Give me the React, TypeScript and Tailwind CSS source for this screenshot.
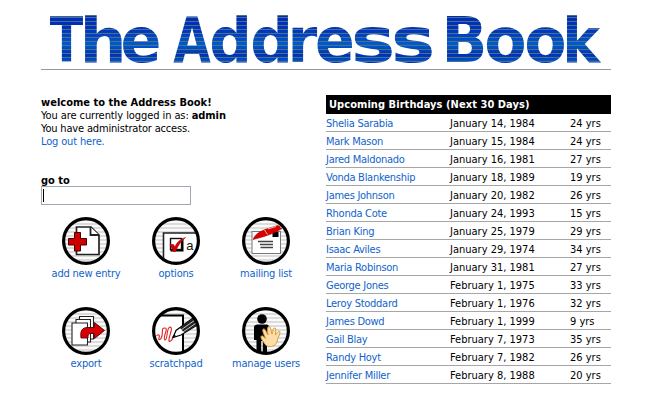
import React from "react";

const birthdays: [string, string, string][] = [
  ["Shelia Sarabia", "January 14, 1984", "24 yrs"],
  ["Mark Mason", "January 15, 1984", "24 yrs"],
  ["Jared Maldonado", "January 16, 1981", "27 yrs"],
  ["Vonda Blankenship", "January 18, 1989", "19 yrs"],
  ["James Johnson", "January 20, 1982", "26 yrs"],
  ["Rhonda Cote", "January 24, 1993", "15 yrs"],
  ["Brian King", "January 25, 1979", "29 yrs"],
  ["Isaac Aviles", "January 29, 1974", "34 yrs"],
  ["Maria Robinson", "January 31, 1981", "27 yrs"],
  ["George Jones", "February 1, 1975", "33 yrs"],
  ["Leroy Stoddard", "February 1, 1976", "32 yrs"],
  ["James Dowd", "February 1, 1999", "9 yrs"],
  ["Gail Blay", "February 7, 1973", "35 yrs"],
  ["Randy Hoyt", "February 7, 1982", "26 yrs"],
  ["Jennifer Miller", "February 8, 1988", "20 yrs"],
];

// Advance, left and right ink edge of each letter, in em.
const metrics: Record<string, [number, number, number]> = {
  T: [0.682, 0.005, 0.677],
  h: [0.712, 0.084, 0.634],
  e: [0.678, 0.043, 0.631],
  A: [0.774, 0.005, 0.769],
  d: [0.716, 0.046, 0.634],
  r: [0.493, 0.084, 0.49],
  s: [0.595, 0.053, 0.544],
  B: [0.762, 0.092, 0.706],
  o: [0.687, 0.043, 0.643],
  k: [0.665, 0.084, 0.682],
};

// Left and right edge of every letter of the title.
const title: [string, number, number][] = [
  ["T", 50, 83],
  ["h", 85, 121.5],
  ["e", 123, 158.5],
  ["A", 173.5, 210.5],
  ["d", 212, 247],
  ["d", 253, 288],
  ["r", 292.5, 317],
  ["e", 317.5, 352],
  ["s", 355, 391.5],
  ["s", 395, 431.5],
  ["B", 447, 484],
  ["o", 487, 524],
  ["o", 527, 564],
  ["k", 567, 601],
];

function Logo() {
  return (
    <svg width="570" height="54" viewBox="41 12 570 54" className="block overflow-visible">
      <defs>
        <linearGradient id="sheen" x1="0" y1="0" x2="0" y2="1">
          <stop offset="0" stopColor="#002cb4" />
          <stop offset="0.3" stopColor="#0034bc" />
          <stop offset="0.62" stopColor="#005ccc" />
          <stop offset="0.84" stopColor="#0030b4" />
          <stop offset="1" stopColor="#0058cc" />
        </linearGradient>
        <pattern id="scan" patternUnits="userSpaceOnUse" x="0" y="16" width="1400" height="46">
          <rect width="1400" height="46" fill="url(#sheen)" />
          {Array.from({ length: 12 }, (_, i) => (
            <rect key={i} y={i * 4 + 1} width="1400" height="1" fill="#4c7088" />
          ))}
        </pattern>
      </defs>
      <text
        y="62"
        fill="url(#scan)"
        className="font-['DejaVu_Sans',sans-serif] text-[63px] font-bold"
      >
        {title.map(([letter, left, right], i) => {
          const [advance, inkLeft, inkRight] = metrics[letter];
          const scale = (right - left) / (inkRight - inkLeft);
          return (
            <tspan key={i} x={left - inkLeft * scale} textLength={advance * scale} lengthAdjust="spacingAndGlyphs">
              {letter}
            </tspan>
          );
        })}
      </text>
    </svg>
  );
}

function Badge({ id, children }: { id: string; children: React.ReactNode }) {
  return (
    <svg width="48" height="48" viewBox="0 0 48 48" className="block shrink-0">
      <defs>
        <clipPath id={id}>
          <circle cx="24" cy="24" r="22" />
        </clipPath>
      </defs>
      <g clipPath={`url(#${id})`}>
        <rect width="48" height="48" fill="#fafafa" />
        {Array.from({ length: 12 }, (_, i) => (
          <rect key={i} y={i * 4 + 2} width="48" height="2" fill="#dcdcdc" />
        ))}
        {children}
      </g>
      <circle cx="24" cy="24" r="22.4" fill="none" stroke="#000" strokeWidth="3.2" />
    </svg>
  );
}

function AddIcon() {
  return (
    <Badge id="add">
      <path d="M14.5 10H29L37 18V37.5H14.5Z" fill="#fff" stroke="#222" strokeWidth="1.7" />
      <path d="M28.5 10V18H37" fill="#fff" stroke="#222" strokeWidth="1.8" />
      <path d="M12.5 15.5h6v6h6v6.5h-6v6h-6v-6h-6v-6.5h6Z" fill="#d00000" stroke="#400" strokeWidth="1" />
    </Badge>
  );
}

function OptionsIcon() {
  return (
    <Badge id="options">
      <path d="M11.5 50V16H50V50Z" fill="#fff" stroke="#222" strokeWidth="1.6" />
      <rect x="18.5" y="21.5" width="11" height="11" fill="#fff" stroke="#111" strokeWidth="1.4" />
      <path d="M30.5 22V33.5H18.5" fill="none" stroke="#000" strokeWidth="2" />
      <path d="M18 27.5 21.5 27.5 22.8 30C25 25 28.5 22 33.5 20.5C29 24 26 28.5 23.5 34.5H21.3Z" fill="#d00000" stroke="#c00000" strokeWidth="0.6" />
      <text x="34.2" y="32.5" fill="#111" className="font-['Liberation_Sans',sans-serif] text-[13px]">a</text>
    </Badge>
  );
}

function MailIcon() {
  return (
    <Badge id="mailing">
      <rect x="10" y="14.5" width="28.5" height="22" fill="#fff" stroke="#777" strokeWidth="1" />
      <path d="M16 24.5h15M18 27.5h13M18.5 30.5h12.5" stroke="#444" strokeWidth="1.3" />
      <rect x="30.5" y="15" width="6" height="5" fill="#000" />
      <path d="M11 22.5C13 17 18 14.5 23 12.5L35.5 8.5 38.5 9.5 37.5 10.5 40 11.5 35 14.5C28 18 19 20.5 11 22.5Z" fill="#d80000" stroke="#900" strokeWidth="0.5" />
      <path d="M22.5 13 25.5 17.5M26 12 34 9.5" stroke="#fff" strokeWidth="0.7" />
    </Badge>
  );
}

function ExportIcon() {
  return (
    <Badge id="export">
      <g fill="#fff" stroke="#222" strokeWidth="1.1">
        <path d="M17.5 9.5H31.5V32H17.5Z" />
        <path d="M14 12.5H28.5V35H14Z" />
        <path d="M10 16H25.5V38H10Z" />
      </g>
      <path d="M19 31C18 24 20 20.5 25.5 20.5H32.5V15.5L42.5 23.5 32.5 31.5V26.5H28C26 26.5 26 28.5 26 31Z" fill="#d80000" stroke="#500" strokeWidth="0.9" />
    </Badge>
  );
}

function ScratchIcon() {
  return (
    <Badge id="scratch">
      <path d="M-2 8.5H31V50H-2Z" fill="#fff" stroke="#000" strokeWidth="2" />
      <path d="M4.5 29C7 26 8 29 7 31C6 34 9 33 10 29C11 24 9 21 13 21C17 21 10 31 13 33C16 33 14 21 18 20C22 20 16 31 17 34C18 35 21 33 21 29" fill="none" stroke="#e02020" strokeWidth="1.1" />
      <path d="M21 30.5 24 23.5 41 11 47 17 29 28Z" fill="#fff" stroke="#000" strokeWidth="1.2" />
      <path d="M28 21 41 11 47 17 32.5 26Z" fill="#222" />
      <path d="M29 23 43 13M31 25 45 15.5" stroke="#ddd" strokeWidth="0.9" />
      <path d="M21 30.5 22 27.5 24 29Z" fill="#000" />
    </Badge>
  );
}

function UsersIcon() {
  return (
    <Badge id="users">
      <circle cx="20" cy="12" r="4.8" fill="#000" />
      <path d="M15 17.5H25Q27 18 27.5 20.5L29 30H25V48H20.8V34H19.2V48H14.5V33H12V20Q12.3 17.7 15 17.5Z" fill="#000" />
      <path d="M23 37C20 33 18 30 19.5 29C21 28 22 31 23.5 31.5C22 27 19.5 23 21.5 22C23.5 21.5 24.5 26 26 28C25.5 24 25 19.5 27 19.5C29 19.5 29 25 30 27C31 24 31 20.5 33 21C34.5 21.5 33.5 26 33.5 28C35 26 36.5 23.5 37.8 24.5C39 25.5 36 30 35.5 33C35 37 32 39.5 28.5 39.5C26 39.5 24 39 23 37Z" fill="#ffdda8" stroke="#d99a3c" strokeWidth="1" />
    </Badge>
  );
}

const actions = [
  { label: "add new entry", icon: <AddIcon /> },
  { label: "options", icon: <OptionsIcon /> },
  { label: "mailing list", icon: <MailIcon /> },
  { label: "export", icon: <ExportIcon /> },
  { label: "scratchpad", icon: <ScratchIcon /> },
  { label: "manage users", icon: <UsersIcon /> },
];

export default function App() {
  return (
    <div className="h-[400px] w-[650px] overflow-hidden bg-white pt-3 pl-[41px] font-['DejaVu_Sans_Condensed','DejaVu_Sans',sans-serif] text-[11px] leading-[13px] text-black [font-stretch:condensed]">
      <header className="w-[570px] border-b border-[#999] pb-[3px]">
        <Logo />
      </header>
      <main className="flex w-[570px] justify-between pt-[25px]">
        <section className="w-[270px] pt-px">
          <p className="font-bold tracking-[0.02px]">welcome to the Address Book!</p>
          <p className="tracking-[-0.08px]">
            You are currently logged in as: <b>admin</b>
          </p>
          <p className="tracking-[-0.17px]">You have administrator access.</p>
          <a className="tracking-[-0.15px] text-[#1163cc]">Log out here.</a>
          <div className="mt-[26px]">
            <label className="block font-bold">go to</label>
            <div className="-mt-px flex h-[19px] w-[150px] items-start border border-[#a0a8b4] bg-white pt-0.5 pl-px">
              <span className="h-[13px] w-px bg-black" />
            </div>
          </div>
          <nav className="mt-3 grid grid-cols-3 gap-y-[27px]">
            {actions.map((a) => (
              <a key={a.label} className="flex h-[63px] flex-col items-center whitespace-nowrap tracking-[-0.2px] text-[#1163cc]">
                {a.icon}
                <span className="mt-0.5">{a.label}</span>
              </a>
            ))}
          </nav>
        </section>
        <section className="w-[285px]">
          <h2 className="h-[19px] bg-black pt-[3px] pl-[3px] font-bold tracking-[0.06px] text-white">Upcoming Birthdays (Next 30 Days)</h2>
          {birthdays.map(([name, date, age]) => (
            <div key={name} className="flex h-[18px] border-b border-[#a6a6a6] pt-[3px]">
              <span className="w-[124px] tracking-[-0.27px] text-[#1163cc]">{name}</span>
              <span className="w-[120px]">{date}</span>
              <span>{age}</span>
            </div>
          ))}
        </section>
      </main>
    </div>
  );
}
